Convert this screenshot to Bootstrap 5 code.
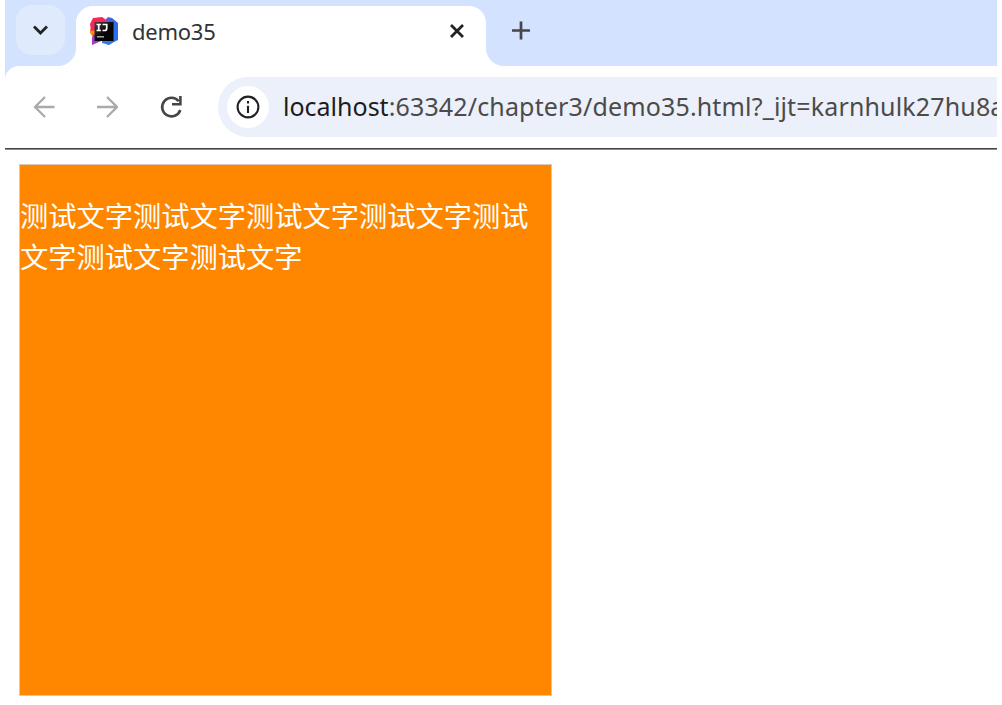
<!DOCTYPE html>
<html lang="zh-CN">
<head>
  <meta charset="UTF-8">
  <meta name="viewport" content="width=device-width, initial-scale=1.0">
  <title>demo35</title>
  <link href="https://cdn.jsdelivr.net/npm/bootstrap@5.3.0/dist/css/bootstrap.min.css" rel="stylesheet">
  <style>
    body {
      background-color: #fff;
      font-family: "Noto Sans", "Noto Sans CJK SC", sans-serif;
    }
    .browser {
      width: 992px;
      height: 705px;
      margin-left: 5px;
      background: linear-gradient(#d3e2fe 100px, #fff 100px);
    }
    .tab-strip {
      height: 66px;
    }
    .tab-search {
      width: 49px;
      height: 50px;
      margin: 5px 0 0 11px;
      border-radius: 16px;
      background-color: #dfeafd;
    }
    .strip-gap {
      width: 71px;
    }
    .active-tab {
      width: 410px;
      height: 60.5px;
      margin-top: 5.5px;
      padding: 0 20px 10px 13px;
      border-radius: 17px 17px 0 0;
      background-color: #fff;
    }
    /* rounded feet where the tab meets the toolbar */
    .foot {
      position: absolute;
      bottom: 0;
      width: 18px;
      height: 18px;
    }
    .tab-title {
      font-size: 22px;
      line-height: 30px;
      margin-left: 13px;
      color: #333;
      letter-spacing: -.25px;
    }
    .toolbar {
      height: 82px;
      padding-left: 28px;
      padding-top: 10.5px;
      border-top-left-radius: 14px;
      background-color: #fff;
    }
    .nav-buttons {
      height: 60px;
      gap: 41px;
    }
    .address {
      height: 60px;
      margin-left: 35px;
      padding-left: 9px;
      border-radius: 30px 0 0 30px;
      background-color: #ebf0fa;
    }
    .site-info {
      width: 42px;
      height: 42px;
    }
    .url {
      font-size: 25px;
      line-height: 34px;
      margin-left: 14px;
      padding-bottom: 2px;
      color: #4b4b4b;
      letter-spacing: .15px;
    }
    .url .host {
      color: #1c1c1c;
      letter-spacing: 0;
    }
    .page {
      border-top: 1px solid #444;
      box-shadow: inset 0 1px #8c8c8c;
      padding: 15px 0 0 14px;
    }
    .box {
      width: 533px;
      height: 532px;
      padding-top: 29px;
      border: 1px solid #dcc8b4;
      background-color: #ff8700;
    }
    .box p {
      font-family: "Noto Sans CJK SC", sans-serif;
      font-size: 28.25px;
      line-height: 41.3px;
    }
  </style>
</head>
<body>

<div class="browser overflow-hidden">
  <div class="tab-strip d-flex">
    <div class="strip-gap position-relative">
      <div class="tab-search d-flex align-items-center justify-content-center">
        <svg width="18" height="14" viewBox="0 0 18 14" fill="none" stroke="#222" stroke-width="2.8"><path d="M2 3.5L8.5 10 15 3.5"/></svg>
      </div>
      <svg class="foot end-0" viewBox="0 0 18 18"><path d="M18 0v18H0A18 18 0 0 0 18 0z" fill="#fff"/></svg>
    </div>
    <div class="active-tab d-flex align-items-center">
      <svg width="30" height="30" viewBox="0 0 30 30">
        <defs>
          <linearGradient id="blue" x1="0" y1="0" x2="1" y2="1">
            <stop offset="0" stop-color="#8f4bcb"/>
            <stop offset=".4" stop-color="#3865e5"/>
            <stop offset="1" stop-color="#2376ed"/>
          </linearGradient>
          <linearGradient id="chip" x1="0" y1="0" x2="1" y2="1">
            <stop offset="0" stop-color="#444"/>
            <stop offset=".55" stop-color="#050505"/>
          </linearGradient>
        </defs>
        <path d="M16 4l3-3 4 1 6 5v17l-4 2-5 3-6-3z" fill="url(#blue)"/>
        <path d="M1 13l6-2v10H4l-3-4z" fill="#ff8b20"/>
        <path d="M4 2l9-1 3 2 2 3-11 8-5 1-1-7z" fill="#fc2458"/>
        <path d="M4 18l10 6-4 2-7 3V22z" fill="#a63bc7"/>
        <path d="M13 23h12l-5 6-7-2z" fill="#367be9"/>
        <rect x="5.5" y="6" width="19" height="19" fill="url(#chip)"/>
        <path d="M7.5 8.5h4.4M9.7 8.5v6M7.5 14.5h4.4M13.5 8.5h4.2v4q0 2-2 2h-2.2" fill="none" stroke="#fff" stroke-width="1.7"/>
        <path d="M8 20.8h7" stroke="#aaa" stroke-width="1.5"/>
      </svg>
      <span class="tab-title">demo35</span>
      <svg class="ms-auto" width="18" height="18" viewBox="0 0 18 18" stroke="#222" stroke-width="2.8"><path d="M3 3l12 12M15 3L3 15"/></svg>
    </div>
    <div class="position-relative ps-4 pt-3">
      <svg class="foot start-0" viewBox="0 0 18 18"><path d="M0 0v18h18A18 18 0 0 1 0 0z" fill="#fff"/></svg>
      <svg class="d-block mt-1" width="22" height="22" viewBox="0 0 22 22" stroke="#444746" stroke-width="2.7"><path d="M11 1.5v18M2 10.5h18"/></svg>
    </div>
  </div>

  <div class="toolbar d-flex">
    <div class="nav-buttons d-flex align-items-center flex-shrink-0">
      <svg width="22" height="24" viewBox="0 0 22 24" fill="none" stroke="#aaa" stroke-width="2.3"><path d="M21.5 12H2M12 2L2 12l10 10"/></svg>
      <svg width="22" height="24" viewBox="0 0 22 24" fill="none" stroke="#aaa" stroke-width="2.3"><path d="M1 12h19.5M11 2l10 10-10 10"/></svg>
      <svg width="24" height="24" viewBox="0 0 24 24" fill="none" stroke="#444746" stroke-width="2.6"><path d="M21.3 15A9.3 9.3 0 1 1 19.7 6.2M21.4 1v8.2H13"/></svg>
    </div>
    <div class="address d-flex align-items-center flex-grow-1 overflow-hidden">
      <span class="site-info d-flex align-items-center justify-content-center flex-shrink-0 bg-white rounded-circle">
        <svg width="24" height="24" viewBox="0 0 24 24" fill="none" stroke="#222" stroke-width="2.1"><circle cx="12" cy="12" r="10.4"/><path d="M12 10.8V18M12 6v2.5"/></svg>
      </span>
      <span class="url text-nowrap"><span class="host">localhost</span>:63342/chapter3/demo35.html?_ijt=karnhulk27hu8a</span>
    </div>
  </div>

  <div class="page">
    <div class="box">
      <p class="text-white mb-0">测试文字测试文字测试文字测试文字测试文字测试文字测试文字</p>
    </div>
  </div>
</div>

<script src="https://cdn.jsdelivr.net/npm/bootstrap@5.3.0/dist/js/bootstrap.bundle.min.js"></script>
</body>
</html>
